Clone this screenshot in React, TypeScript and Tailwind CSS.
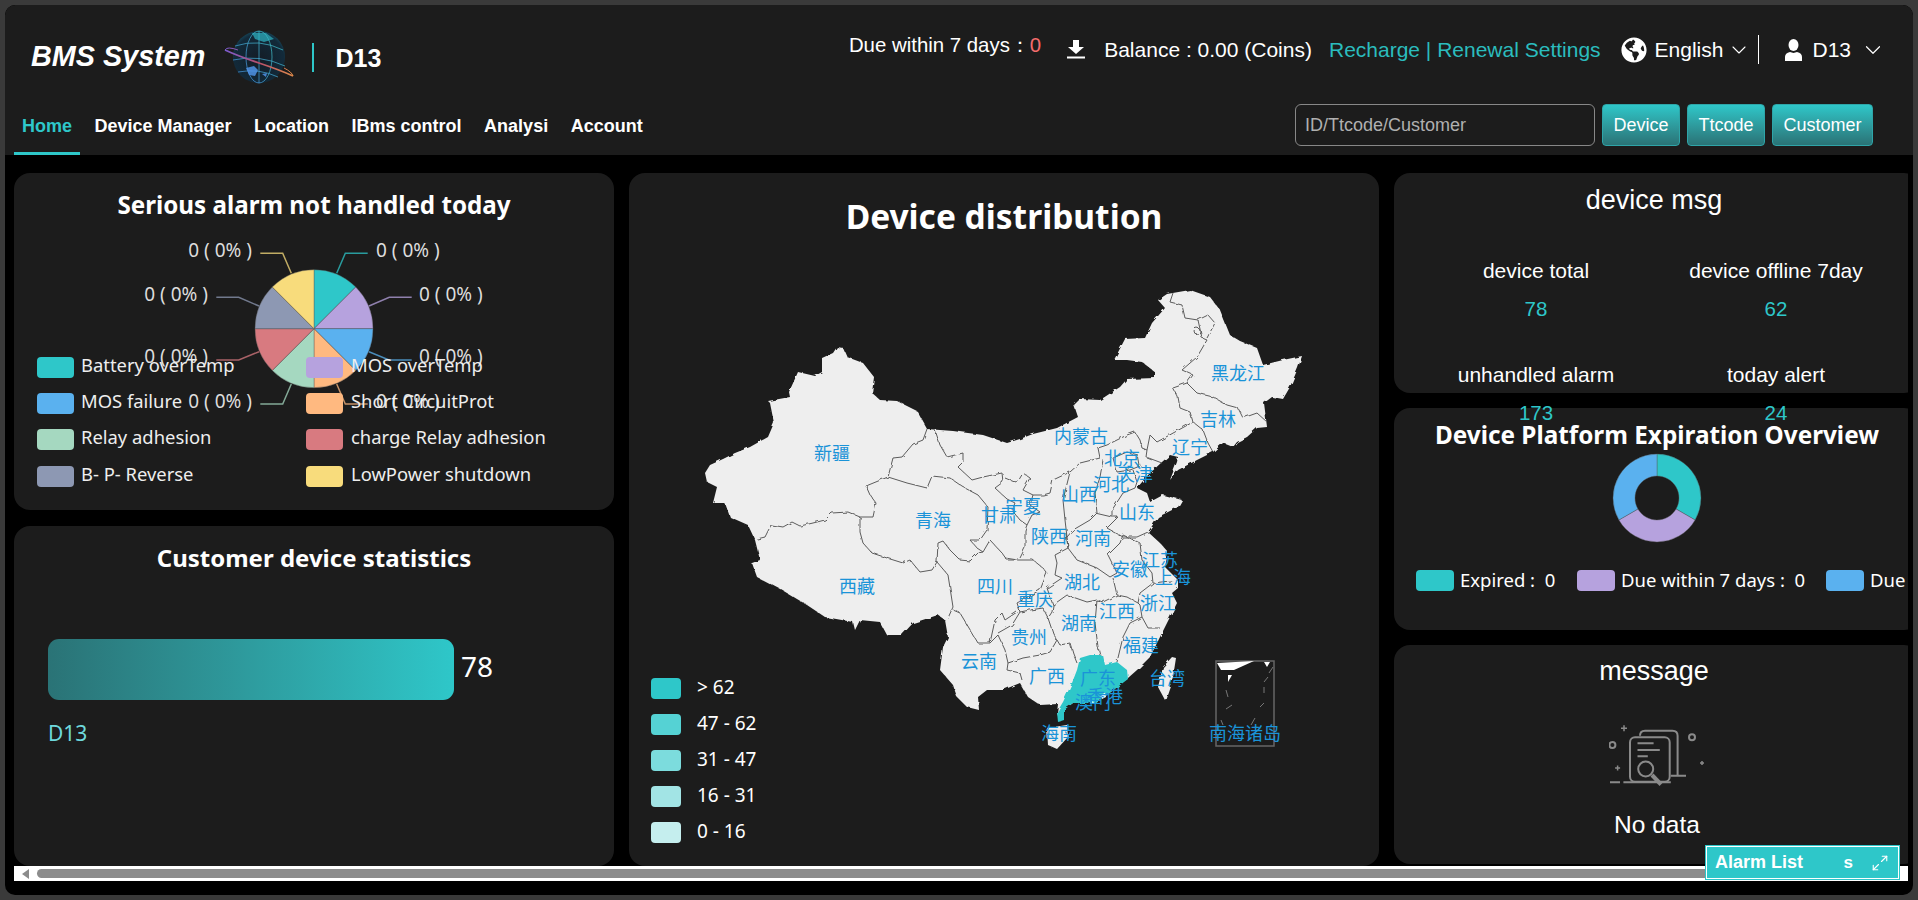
import { ChevronDown, Maximize2 } from 'lucide-react';
import { FaGlobeAmericas } from 'react-icons/fa';

const CHART_FONT = "font-['Noto_Sans','Noto_Sans_CJK_SC',sans-serif]";

const pieSlices = [
  { name: 'Battery overTemp', color: '#2ec7c9', line: [[336.7, 273.3], [345.3, 253.3], [367.7, 253.3]], label: [376, 252, 'start'] },
  { name: 'MOS overTemp', color: '#b6a2de', line: [[369, 306], [389.3, 297.3], [411.7, 297.3]], label: [419, 296, 'start'] },
  { name: 'MOS failure', color: '#5ab1ef', line: [[369, 351.7], [389, 360], [411.7, 360]], label: [419, 358, 'start'] },
  { name: 'Short CircuitProt', color: '#ffb980', line: [[336.7, 384], [345.3, 404], [367.7, 404]], label: [376, 403, 'start'] },
  { name: 'Relay adhesion', color: '#a5d8c0', line: [[291.3, 384], [282.7, 404], [260.3, 404]], label: [252, 403, 'end'] },
  { name: 'charge Relay adhesion', color: '#d87a80', line: [[259, 351.7], [238.7, 360], [216.3, 360]], label: [208, 358, 'end'] },
  { name: 'B- P- Reverse', color: '#8d98b3', line: [[259, 306], [238.7, 297.3], [216.3, 297.3]], label: [208, 296, 'end'] },
  { name: 'LowPower shutdown', color: '#f8dc7c', line: [[291.3, 273.3], [282.7, 253.3], [260.3, 253.3]], label: [252, 252, 'end'] },
] as const;

const legendRows = [
  ['Battery overTemp', '#2ec7c9', 'MOS overTemp', '#b6a2de'],
  ['MOS failure', '#5ab1ef', 'Short CircuitProt', '#ffb980'],
  ['Relay adhesion', '#a5d8c0', 'charge Relay adhesion', '#d87a80'],
  ['B- P- Reverse', '#8d98b3', 'LowPower shutdown', '#f8dc7c'],
];

const mapLegend = [
  { label: '> 62', color: '#2ec7c9' },
  { label: '47 - 62', color: '#55d2d4' },
  { label: '31 - 47', color: '#7cdcdd' },
  { label: '16 - 31', color: '#a2e4e5' },
  { label: '0 - 16', color: '#c5eeee' },
];

const outline =
  '705,473 710,465 723,459 735,453 750,447 768,437 774,423 770,403 768,401 790,397 789,392 798,372 815,376 822,372 822,358 833,353 837,347 843,348 847,357 863,363 874,377 872,393 880,400 897,401 917,411 927,429 953,431 983,435 1007,443 1020,439 1033,434 1057,428 1078,417 1074,405 1080,399 1100,400 1120,387 1127,379 1155,378 1155,372 1142,362 1127,360 1114,360 1125,339 1145,338 1152,323 1165,308 1158,300 1167,294 1190,290 1210,297 1220,310 1230,335 1240,341 1257,348 1263,365 1283,360 1302,356 1298,368 1290,387 1283,399 1272,397 1264,403 1267,427 1257,428 1247,437 1237,442 1233,447 1223,443 1213,452 1197,460 1178,470 1170,480 1177,462 1178,457 1170,455 1162,462 1148,475 1137,488 1147,493 1150,502 1163,495 1182,500 1178,507 1158,517 1148,532 1160,543 1168,552 1165,567 1178,580 1178,588 1172,593 1177,603 1167,623 1157,643 1150,657 1137,670 1128,678 1107,695 1093,703 1073,703 1063,710 1060,722 1057,713 1058,704 1040,705 1028,697 1020,683 1003,690 987,690 978,697 979,710 967,707 957,697 953,685 940,670 943,647 948,637 945,620 938,615 913,623 902,635 887,635 880,622 860,620 855,630 853,622 825,617 807,605 782,590 757,577 752,563 760,560 755,540 748,525 730,517 725,503 713,503 717,487 707,482';

const borders = [
  '757,539 765,537 771,525 783,527 792,522 800,526 813,523 825,520 832,513 848,512 860,517 873,517 876,503 870,495 866,486 888,477 893,458 902,457 913,444 923,440 927,429',
  '860,517 860,532 863,543 872,553 887,558 903,563 910,560 920,572 932,570 937,562 938,543 943,541 950,550 960,560 970,561 978,553 983,552',
  '888,477 907,483 927,488 932,476 950,478 963,487 978,495 988,507 987,530 980,540 970,540 977,548 983,552 990,540 1002,553 1007,560 1017,560',
  '937,562 948,575 953,607 948,618',
  '935,430 940,445 947,457 963,453 963,462 958,467 972,480 983,477 1002,473',
  '1002,473 1003,482 995,488 1007,499 1015,503 1012,510 1020,520 1027,525 1032,515 1040,512 1030,505 1033,495 1023,490 1030,478 1023,473 1017,483 1005,478',
  '1033,495 1043,495 1050,493 1053,480 1070,472 1080,463 1100,458',
  '1070,472 1063,500 1065,520 1067,537 1068,548',
  '1103,460 1100,477 1095,493 1097,513 1090,520 1073,530 1067,537',
  '1100,458 1098,448 1107,445 1127,435 1135,432 1140,440 1142,448 1147,450 1150,435 1157,442 1193,422',
  '1147,450 1146,457 1162,463',
  '1193,422 1203,430 1208,443 1213,452',
  '1193,422 1190,412 1180,408 1178,397 1173,388 1187,383',
  '1187,383 1197,393 1213,397 1227,405 1238,408 1243,418 1257,413 1267,422',
  '1187,383 1193,375 1182,370 1197,357 1207,340 1202,338 1198,320 1185,318 1182,305 1170,302 1173,293',
  '1198,320 1208,315 1215,323 1207,338',
  '1113,458 1127,452 1138,455 1140,466 1130,470 1117,472 1113,458',
  '1133,470 1137,482 1135,488',
  '1135,488 1123,493 1112,510 1112,517',
  '1095,513 1112,517 1118,517 1107,528 1123,537 1137,537 1148,532',
  '1066,533 1068,548 1077,560 1097,568 1110,577 1117,573 1108,555 1120,543 1123,535',
  '1123,535 1140,543 1142,560 1152,573 1153,583 1178,580',
  '1153,583 1140,593 1138,603 1127,597 1117,595 1113,578',
  '1117,595 1103,602 1097,600 1087,602 1067,595 1053,605',
  '1068,548 1055,555 1057,563 1055,575 1062,578 1047,588 1053,605 1052,612 1048,618',
  '1005,558 1018,560 1033,560 1043,568 1047,573 1040,590 1017,603 1020,612 1030,610 1043,608 1048,618',
  '1020,558 1025,548 1025,530 1027,525',
  '953,610 960,613 978,643 990,643 995,620 1002,613 1005,620 1017,612',
  '990,643 998,635 1005,650 1008,663 1007,670 1020,673 1022,680',
  '998,633 1012,625 1020,612',
  '1008,663 1023,658 1040,655 1050,652 1057,640 1053,633 1048,618',
  '1057,640 1060,645 1070,643 1073,653 1077,663',
  '1097,600 1095,623 1098,647 1100,655',
  '1117,662 1123,637 1130,623 1142,617 1140,605 1138,603',
  '1142,617 1148,628 1160,628',
];

const guangdong =
  '1080,658 1090,655 1103,655 1105,665 1117,662 1127,670 1128,679 1107,695 1093,703 1073,703 1064,710 1064,720 1058,722 1057,712 1063,702 1072,683 1077,670';

const mapLabels: [string, number, number][] = [
  ['新疆', 832, 455], ['青海', 933, 522], ['西藏', 857, 588], ['四川', 995, 588], ['黑龙江', 1238, 375],
  ['吉林', 1218, 421], ['辽宁', 1190, 449], ['内蒙古', 1081, 438], ['北京', 1122, 460], ['天津', 1135, 476],
  ['河北', 1111, 486], ['山西', 1079, 496], ['宁夏', 1023, 508], ['山东', 1137, 514], ['甘肃', 999, 517],
  ['陕西', 1049, 538], ['河南', 1093, 540], ['江苏', 1160, 562], ['安徽', 1130, 571], ['上海', 1173, 579],
  ['湖北', 1082, 584], ['重庆', 1035, 601], ['浙江', 1158, 605], ['江西', 1117, 613], ['湖南', 1079, 625],
  ['贵州', 1029, 639], ['福建', 1141, 647], ['云南', 979, 663], ['广西', 1047, 678], ['广东', 1098, 680],
  ['台湾', 1167, 680], ['香港', 1105, 698], ['澳门', 1093, 704], ['海南', 1059, 735], ['南海诸岛', 1245, 735],
];

function slicePath(cx: number, cy: number, r: number, r0: number, from: number, to: number) {
  const pt = (rad: number, deg: number) => {
    const a = ((deg - 90) * Math.PI) / 180;
    return `${(cx + rad * Math.cos(a)).toFixed(2)} ${(cy + rad * Math.sin(a)).toFixed(2)}`;
  };
  const large = to - from > 180 ? 1 : 0;
  if (r0 === 0) return `M${cx} ${cy}L${pt(r, from)}A${r} ${r} 0 ${large} 1 ${pt(r, to)}Z`;
  return `M${pt(r, from)}A${r} ${r} 0 ${large} 1 ${pt(r, to)}L${pt(r0, to)}A${r0} ${r0} 0 ${large} 0 ${pt(r0, from)}Z`;
}

function GlobeLogo() {
  return (
    <svg width="70" height="54" viewBox="0 0 70 54" className="block">
      <defs>
        <radialGradient id="sphere" cx="50%" cy="55%" r="60%">
          <stop offset="0%" stopColor="#141c26" />
          <stop offset="80%" stopColor="#122a3a" />
          <stop offset="100%" stopColor="#17546a" />
        </radialGradient>
        <linearGradient id="ring" x1="0" y1="0" x2="1" y2="0">
          <stop offset="0%" stopColor="#7a5bd0" />
          <stop offset="50%" stopColor="#b8506a" />
          <stop offset="100%" stopColor="#e08a4a" />
        </linearGradient>
        <linearGradient id="grid" x1="1" y1="0" x2="0" y2="1">
          <stop offset="0%" stopColor="#3fd0c8" />
          <stop offset="100%" stopColor="#4a8fe8" />
        </linearGradient>
      </defs>
      <circle cx="35" cy="27" r="26" fill="url(#sphere)" />
      <g fill="none" stroke="url(#grid)" strokeWidth="0.7">
        <ellipse cx="35" cy="27" rx="13" ry="26" />
        <path d="M11 16Q35 8 59 20M9 30Q35 24 61 36M14 42Q35 38 54 47M35 1V53" />
      </g>
      <path d="M22 38l8-2 4 4-3 6-6-1zM38 44l5-1-1 4z" fill="#4f93e6" opacity="0.85" />
      <path d="M28 3l14 0 8 6-10 3-9-3z" fill="#2fb5c4" opacity="0.7" />
      <path d="M1 20Q14 26 35 33T69 46" fill="none" stroke="url(#ring)" strokeWidth="1.8" />
      <path d="M1 20Q3 16 14 20M69 46Q68 42 60 38" fill="none" stroke="url(#ring)" strokeWidth="1" />
    </svg>
  );
}

function NoDataIcon() {
  return (
    <svg width="96" height="62" viewBox="0 0 96 62" fill="none" stroke="#8a8a8a" strokeWidth="2" className="block">
      <path d="M31 10.7Q31 5.7 36 5.7H63.5Q68.6 5.7 68.6 10.7V50" />
      <rect x="21" y="12.3" width="39.7" height="44.4" rx="5" fill="#1c1c1c" />
      <path d="M28.5 18.3H44.6M28.5 25H50.8M28.5 31.3H38.8" />
      <circle cx="36.7" cy="44" r="7.5" fill="#1c1c1c" />
      <path d="M1 57.3H11M14.4 57.3H61.8M61.8 50.7H77" />
      <path d="M43 50L52 59.5" strokeWidth="4" />
      <circle cx="3.4" cy="20" r="3" />
      <circle cx="83" cy="12.3" r="3" />
      <path d="M12 3.3H18M15 0.3V6.3M6.1 43H11.1M8.6 40.5V45.5M91 38H95M93 36V40" strokeWidth="1.5" />
    </svg>
  );
}

function Header() {
  return (
    <div className="h-[150px] shrink-0 rounded-t-[10px] bg-[#1c1c1c] font-['Liberation_Sans',sans-serif] text-white">
      <div className="flex h-[90px] items-center justify-between pl-[26px] pr-[27px]">
        <div className="mt-[14px] flex items-center">
          <span className="text-[28.8px] font-bold italic">BMS System</span>
          <span className="ml-[19px]">
            <GlobeLogo />
          </span>
          <span className="ml-[18px] h-[29px] w-[2px] bg-[#2ec7c9]" />
          <span className="ml-[21px] mt-[4px] text-[25px] font-bold">D13</span>
        </div>
        <div className="flex items-center text-[21px]">
          <span className="mb-[10px] text-[20.4px]">
            Due within 7 days：<span className="text-[#f56c6c]">0</span>
          </span>
          <svg width="20" height="19" viewBox="0 0 20 19" className="ml-[25px] block" fill="#fff">
            <path d="M7 0H13V7H18L10 14L2 7H7Z" />
            <rect x="1" y="16.5" width="18" height="2" />
          </svg>
          <span className="ml-[18px]">Balance : 0.00 (Coins)</span>
          <span className="ml-[17px] text-[#2bbcbe]">Recharge | Renewal Settings</span>
          <FaGlobeAmericas size={26} className="ml-[20px]" />
          <span className="ml-[8px]">English</span>
          <ChevronDown size={24} strokeWidth={1.1} className="ml-[4px]" />
          <span className="ml-[7px] h-[29px] w-px bg-white" />
          <svg width="19" height="22" viewBox="0 0 19 22" className="ml-[25px] block" fill="#fff">
            <ellipse cx="9.5" cy="6" rx="5" ry="6" />
            <path d="M1 22V18Q1 14 6 13L9.5 14L13 13Q18 14 18 18V22Z" />
          </svg>
          <span className="ml-[9px]">D13</span>
          <ChevronDown size={26} strokeWidth={1.1} className="ml-[9px]" />
        </div>
      </div>
      <div className="flex h-[60px] items-start justify-between pl-[9px] pr-[40px]">
        <nav className="flex gap-[6.5px] text-[18px] font-bold">
          <a className="flex h-[60px] items-center border-b-[3px] border-[#2ec7c9] px-2 pt-[5px] text-[#2ec7c9]">Home</a>
          {['Device Manager', 'Location', 'IBms control', 'Analysi', 'Account'].map((tab) => (
            <a key={tab} className="flex h-[60px] items-center border-b-[3px] border-transparent px-2 pt-[5px]">
              {tab}
            </a>
          ))}
        </nav>
        <div className="mt-[9px] flex gap-[7px]">
          <input
            readOnly
            placeholder="ID/Ttcode/Customer"
            className="h-[42px] w-[300px] rounded-[6px] border border-[#888] bg-transparent pl-[9px] text-[18px] placeholder:text-[#b0b0b0]"
          />
          {[
            ['Device', 'w-[78px]'],
            ['Ttcode', 'w-[78px]'],
            ['Customer', 'w-[101px]'],
          ].map(([label, width]) => (
            <button
              key={label}
              className={`${width} h-[42px] rounded-[4px] border border-[#2ea5a8] bg-gradient-to-b from-[#2ec7c9] to-[#2a7376] text-[18px] text-white`}
            >
              {label}
            </button>
          ))}
        </div>
      </div>
    </div>
  );
}

function AlarmCard() {
  return (
    <div className={`relative h-[337px] rounded-[16px] bg-[#1c1c1c] pl-[23px] text-white ${CHART_FONT}`}>
      <svg className="absolute inset-0 h-full w-full" viewBox="0 0 600 337">
        <g transform="translate(-14 -173)">
          {pieSlices.map((s, i) => (
            <path key={s.name} d={slicePath(314, 328.7, 59, 0, i * 45, (i + 1) * 45)} fill={s.color} stroke="#555" strokeWidth="0.4" />
          ))}
          {pieSlices.map((s) => (
            <g key={s.name}>
              <polyline points={s.line.map((p) => p.join(',')).join(' ')} fill="none" stroke={s.color} strokeOpacity="0.75" strokeWidth="1.5" />
              <text x={s.label[0]} y={s.label[1]} textAnchor={s.label[2]} dominantBaseline="middle" fontSize="19" fill="#ddd">
                0 ( 0% )
              </text>
            </g>
          ))}
        </g>
      </svg>
      <h2 className="relative -ml-[23px] pt-[13px] text-center text-[24.2px] font-bold leading-[38px]">Serious alarm not handled today</h2>
      <div className="relative mt-[133px] flex flex-col gap-[15.2px] text-[18.4px] leading-[21px] text-[#eee]">
        {legendRows.map(([a, ca, b, cb]) => (
          <div key={a} className="flex">
            <div className="flex w-[269px] items-center gap-[7px]">
              <span className="h-[21px] w-[37px] rounded-[4px]" style={{ background: ca }} />
              <span className="-mt-[6px]">{a}</span>
            </div>
            <div className="flex items-center gap-[8px]">
              <span className="h-[21px] w-[37px] rounded-[4px]" style={{ background: cb }} />
              <span className="-mt-[6px]">{b}</span>
            </div>
          </div>
        ))}
      </div>
    </div>
  );
}

function CustomerCard() {
  return (
    <div className={`flex-1 rounded-[16px] bg-[#1c1c1c] px-[34px] text-white ${CHART_FONT}`}>
      <h2 className="pt-[13px] text-center text-[24px] font-bold leading-[38px]">Customer device statistics</h2>
      <div className="mt-[62px] flex items-center">
        <div className="h-[61px] w-[406px] rounded-[11px] bg-gradient-to-r from-[#2a7376] to-[#2ec7c9]" />
        <span className="-mt-[7px] ml-[7px] text-[28px]">78</span>
      </div>
      <div className="mt-[18px] text-[21px] text-[#6ed8dc]">D13</div>
    </div>
  );
}

function MapCard() {
  return (
    <div className={`relative flex w-[750px] shrink-0 flex-col rounded-[16px] bg-[#1c1c1c] text-white ${CHART_FONT}`}>
      <svg className="absolute inset-0 h-full w-full" viewBox="0 0 750 693">
        <defs>
          <filter id="rough" filterUnits="userSpaceOnUse" x="680" y="270" width="660" height="500">
            <feTurbulence type="fractalNoise" baseFrequency="0.14" numOctaves="2" seed="4" />
            <feDisplacementMap in="SourceGraphic" scale="3.5" />
          </filter>
        </defs>
        <g transform="translate(-629 -173)">
          <g filter="url(#rough)">
            <polygon points={outline} fill="#eeeeee" />
            <polygon points={guangdong} fill="#2ec7c9" />
            <g fill="none" stroke="#5c5c5c" strokeWidth="1" strokeLinejoin="round">
              {borders.map((b) => (
                <polyline key={b} points={b} />
              ))}
              <circle cx="1197" cy="331" r="3" fill="#eee" />
            </g>
            <polygon points="1047,728 1067,725 1068,737 1057,749 1048,745" fill="#eeeeee" />
            <polygon points="1172,657 1176,658 1173,677 1165,700 1158,687 1163,667" fill="#eeeeee" />
          </g>
          <path d="M1100 695l5-2 1 4-4 2zM1090 703l3-2 1 3z" fill="#fff" />
          <rect x="1216" y="661" width="58" height="85" fill="none" stroke="#666" strokeWidth="1.5" />
          <polygon points="1217,663 1254,661 1234,670 1221,670" fill="#fff" />
          <polygon points="1264,662 1270,662 1267,667" fill="#fff" />
          <polygon points="1228,675 1232,675 1228,682" fill="#fff" />
          <path
            d="M1264 687V693M1226 690L1228 697M1226 709L1232 705M1260 707L1264 703M1251 725L1255 718M1221 720L1223 725M1268 677L1264 682M1273 667L1269 673"
            stroke="#777"
            strokeWidth="1"
          />
          {mapLabels.map(([name, x, y]) => (
            <text key={name} x={x} y={y} textAnchor="middle" dominantBaseline="middle" fontSize="18" fill="#1a93d8">
              {name}
            </text>
          ))}
        </g>
      </svg>
      <h1 className="relative pt-[18px] text-center text-[33.5px] font-bold leading-[50px]">Device distribution</h1>
      <div className="relative mb-[23px] mt-auto flex flex-col gap-[15px] pl-[22px] text-[19px] leading-[21px]">
        {mapLegend.map((item) => (
          <div key={item.label} className="flex items-center gap-[16px]">
            <span className="h-[21px] w-[30px] rounded-[4px]" style={{ background: item.color }} />
            <span className="-mt-[3px]">{item.label}</span>
          </div>
        ))}
      </div>
    </div>
  );
}

function DeviceMsgCard() {
  const stats = [
    { label: 'device total', value: '78' },
    { label: 'device offline 7day', value: '62' },
    { label: 'unhandled alarm', value: '173' },
    { label: 'today alert', value: '24' },
  ];
  return (
    <div className="relative z-10 h-[220px] shrink-0 rounded-[16px] bg-[#1c1c1c] text-white">
      <h2 className="pr-[6px] pt-[10px] text-center text-[27px] leading-[34px]">device msg</h2>
      <div className="ml-[22px] mt-[42px] grid w-[480px] grid-cols-2 gap-y-[42px]">
        {stats.map((s) => (
          <div key={s.label} className="text-center text-[21px] leading-[24px]">
            <div>{s.label}</div>
            <div className="mt-[14px] text-[20.5px] text-[#2ec7c9]">{s.value}</div>
          </div>
        ))}
      </div>
    </div>
  );
}

function ExpirationCard() {
  const legend = [
    { label: 'Expired :  0', color: '#2ec7c9', w: 'w-[161px]' },
    { label: 'Due within 7 days :  0', color: '#b6a2de', w: 'w-[249px]' },
    { label: 'Due within 30 days :  0', color: '#5ab1ef', w: 'w-[280px]' },
  ];
  return (
    <div className={`h-[222px] shrink-0 rounded-[16px] bg-[#1c1c1c] text-white ${CHART_FONT}`}>
      <h2 className="whitespace-nowrap pt-[7px] text-center text-[24.3px] font-bold leading-[40px]">Device Platform Expiration Overview</h2>
      <svg width="90" height="90" viewBox="0 0 90 90" className="mx-auto mt-[-2px] block">
        {[
          ['#2ec7c9', 0, 120],
          ['#b6a2de', 120, 240],
          ['#5ab1ef', 240, 360],
        ].map(([color, from, to]) => (
          <path key={color as string} d={slicePath(45, 45, 44, 22, from as number, to as number)} fill={color as string} stroke="#555" strokeWidth="0.4" />
        ))}
      </svg>
      <div className="mt-[27px] flex pl-[22px] text-[18.5px] leading-[21px]">
        {legend.map((l) => (
          <div key={l.label} className={`flex shrink-0 items-center gap-[6px] whitespace-pre ${l.w}`}>
            <span className="h-[21px] w-[38px] rounded-[4px]" style={{ background: l.color }} />
            <span className="-mt-[3px]">{l.label}</span>
          </div>
        ))}
      </div>
    </div>
  );
}

function MessageCard() {
  return (
    <div className="flex h-[219px] shrink-0 flex-col items-center rounded-[16px] bg-[#1c1c1c] text-white">
      <h2 className="pr-[6px] pt-[9px] text-[27px] leading-[34px]">message</h2>
      <div className="mt-[37px]">
        <NoDataIcon />
      </div>
      <div className="mt-[24px] text-[24.5px] leading-[28px]">No data</div>
    </div>
  );
}

export default function App() {
  return (
    <div className="h-screen overflow-hidden bg-[#3a3a3a] p-[5px] font-['Liberation_Sans',sans-serif]">
      <div className="relative flex h-[890px] flex-col overflow-hidden rounded-[10px] bg-black">
        <Header />
        <main className="mr-[5px] flex h-[711px] shrink-0 gap-[15px] overflow-hidden pl-[9px] pt-[18px]">
          <div className="flex w-[600px] shrink-0 flex-col gap-[16px]">
            <AlarmCard />
            <CustomerCard />
          </div>
          <MapCard />
          <div className="flex w-[526px] shrink-0 flex-col gap-[15px]">
            <DeviceMsgCard />
            <ExpirationCard />
            <MessageCard />
          </div>
        </main>
        {/* horizontal scrollbar */}
        <div className="ml-[9px] mr-[5px] flex h-[15px] shrink-0 items-center bg-white">
          <span className="ml-[8px] h-0 w-0 border-y-[5px] border-r-[7px] border-y-transparent border-r-[#8c8c8c]" />
          <span className="ml-[8px] mr-[200px] h-[9px] flex-1 rounded-l-[5px] bg-[#8c8c8c]" />
        </div>
        {/* alarm list dock */}
        <div className="absolute bottom-[15px] right-[13px] flex h-[35px] w-[195px] items-center border border-[#2ec7c9] bg-[#2ec7c9] pl-[9px] pr-[10px] text-[18px] font-bold text-white shadow-[inset_0_0_0_1px_#fff]">
          <span>Alarm List</span>
          <span className="ml-auto text-[17px]">s</span>
          <Maximize2 size={18} strokeWidth={1.5} className="ml-[18px]" />
        </div>
      </div>
    </div>
  );
}
